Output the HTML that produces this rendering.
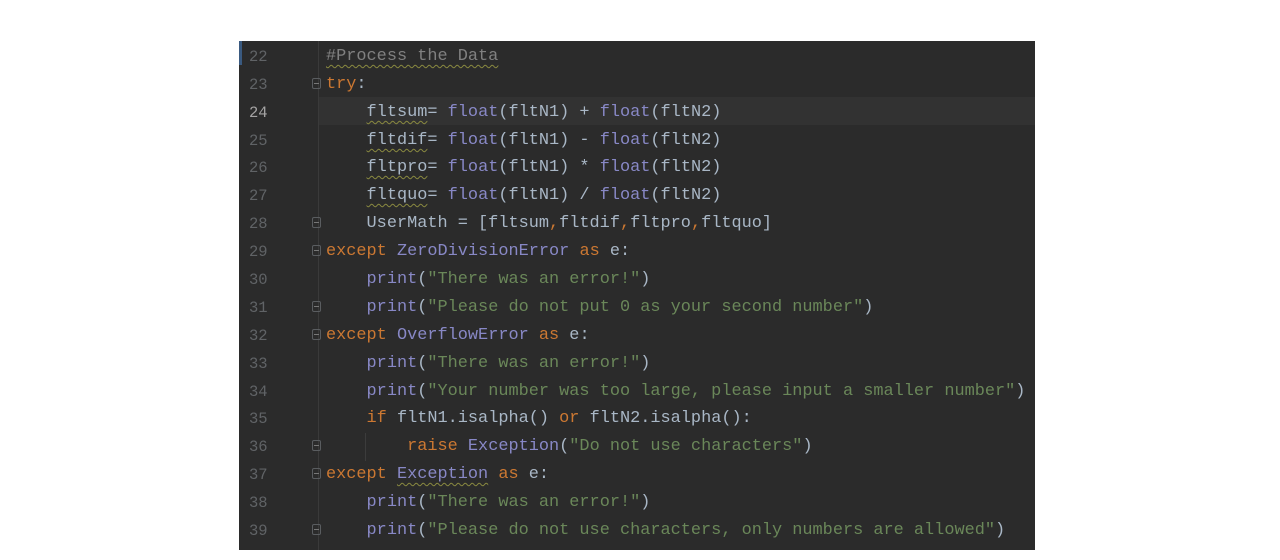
<html><head><style>
body{margin:0;width:1280px;height:560px;background:#fff;position:relative;overflow:hidden}
#ed{position:absolute;left:239px;top:41px;width:796px;height:509px;background:#2b2b2b;overflow:hidden}
#gl{position:absolute;left:79px;top:0;width:1px;height:509px;background:#3a3a3a}
.l{position:absolute;left:0;width:796px;height:28px;line-height:28px;font-family:"Liberation Mono",monospace;font-size:16.9px;color:#a9b7c6;white-space:pre;margin-top:2px}
.n{position:absolute;left:10px;color:#606366;font-size:15.5px}
.c{position:absolute;left:87px}
.k{color:#cc7832}.f{color:#8888c6}.s{color:#6a8759}.cm{color:#808080}
.w{text-decoration:underline wavy #8a8a40;text-decoration-thickness:1px;text-underline-offset:4px}
.fold{position:absolute;left:73px;top:7px;width:9px;height:11px;border:1px solid #5a5d60;border-radius:2px;box-sizing:border-box}
.fold:after{content:"";position:absolute;left:1px;right:1px;top:4px;height:1px;background:#777}
</style></head><body><div id="ed">
<div style="position:absolute;left:0;top:0;width:3px;height:24px;background:#3a5a80"></div>
<div style="position:absolute;left:80px;top:56px;width:716px;height:28px;background:#323232"></div>
<div id="gl"></div>
<div style="position:absolute;left:126px;top:392px;width:1px;height:28px;background:#3c3c3c"></div>
<div class="l" style="top:0"><span class="n">22</span><span class="c"><span class="cm w">#Process the Data</span></span></div>
<div class="l" style="top:28px"><span class="n">23</span><span class="fold"></span><span class="c"><span class="k">try</span>:</span></div>
<div class="l" style="top:56px"><span class="n" style="color:#a4a3a3">24</span><span class="c">    <span class="w">fltsum</span>= <span class="f">float</span>(fltN1) + <span class="f">float</span>(fltN2)</span></div>
<div class="l" style="top:84px"><span class="n">25</span><span class="c">    <span class="w">fltdif</span>= <span class="f">float</span>(fltN1) - <span class="f">float</span>(fltN2)</span></div>
<div class="l" style="top:111px"><span class="n">26</span><span class="c">    <span class="w">fltpro</span>= <span class="f">float</span>(fltN1) * <span class="f">float</span>(fltN2)</span></div>
<div class="l" style="top:139px"><span class="n">27</span><span class="c">    <span class="w">fltquo</span>= <span class="f">float</span>(fltN1) / <span class="f">float</span>(fltN2)</span></div>
<div class="l" style="top:167px"><span class="n">28</span><span class="fold"></span><span class="c">    UserMath = [fltsum<span class="k">,</span>fltdif<span class="k">,</span>fltpro<span class="k">,</span>fltquo]</span></div>
<div class="l" style="top:195px"><span class="n">29</span><span class="fold"></span><span class="c"><span class="k">except</span> <span class="f">ZeroDivisionError</span> <span class="k">as</span> e:</span></div>
<div class="l" style="top:223px"><span class="n">30</span><span class="c">    <span class="f">print</span>(<span class="s">"There was an error!"</span>)</span></div>
<div class="l" style="top:251px"><span class="n">31</span><span class="fold"></span><span class="c">    <span class="f">print</span>(<span class="s">"Please do not put 0 as your second number"</span>)</span></div>
<div class="l" style="top:279px"><span class="n">32</span><span class="fold"></span><span class="c"><span class="k">except</span> <span class="f">OverflowError</span> <span class="k">as</span> e:</span></div>
<div class="l" style="top:307px"><span class="n">33</span><span class="c">    <span class="f">print</span>(<span class="s">"There was an error!"</span>)</span></div>
<div class="l" style="top:335px"><span class="n">34</span><span class="c">    <span class="f">print</span>(<span class="s">"Your number was too large, please input a smaller number"</span>)</span></div>
<div class="l" style="top:362px"><span class="n">35</span><span class="c">    <span class="k">if</span> fltN1.isalpha() <span class="k">or</span> fltN2.isalpha():</span></div>
<div class="l" style="top:390px"><span class="n">36</span><span class="fold"></span><span class="c">        <span class="k">raise</span> <span class="f">Exception</span>(<span class="s">"Do not use characters"</span>)</span></div>
<div class="l" style="top:418px"><span class="n">37</span><span class="fold"></span><span class="c"><span class="k">except</span> <span class="f w">Exception</span> <span class="k">as</span> e:</span></div>
<div class="l" style="top:446px"><span class="n">38</span><span class="c">    <span class="f">print</span>(<span class="s">"There was an error!"</span>)</span></div>
<div class="l" style="top:474px"><span class="n">39</span><span class="fold"></span><span class="c">    <span class="f">print</span>(<span class="s">"Please do not use characters, only numbers are allowed"</span>)</span></div>
<div class="l" style="top:502px"><span class="n">40</span></div>
</div></body></html>
